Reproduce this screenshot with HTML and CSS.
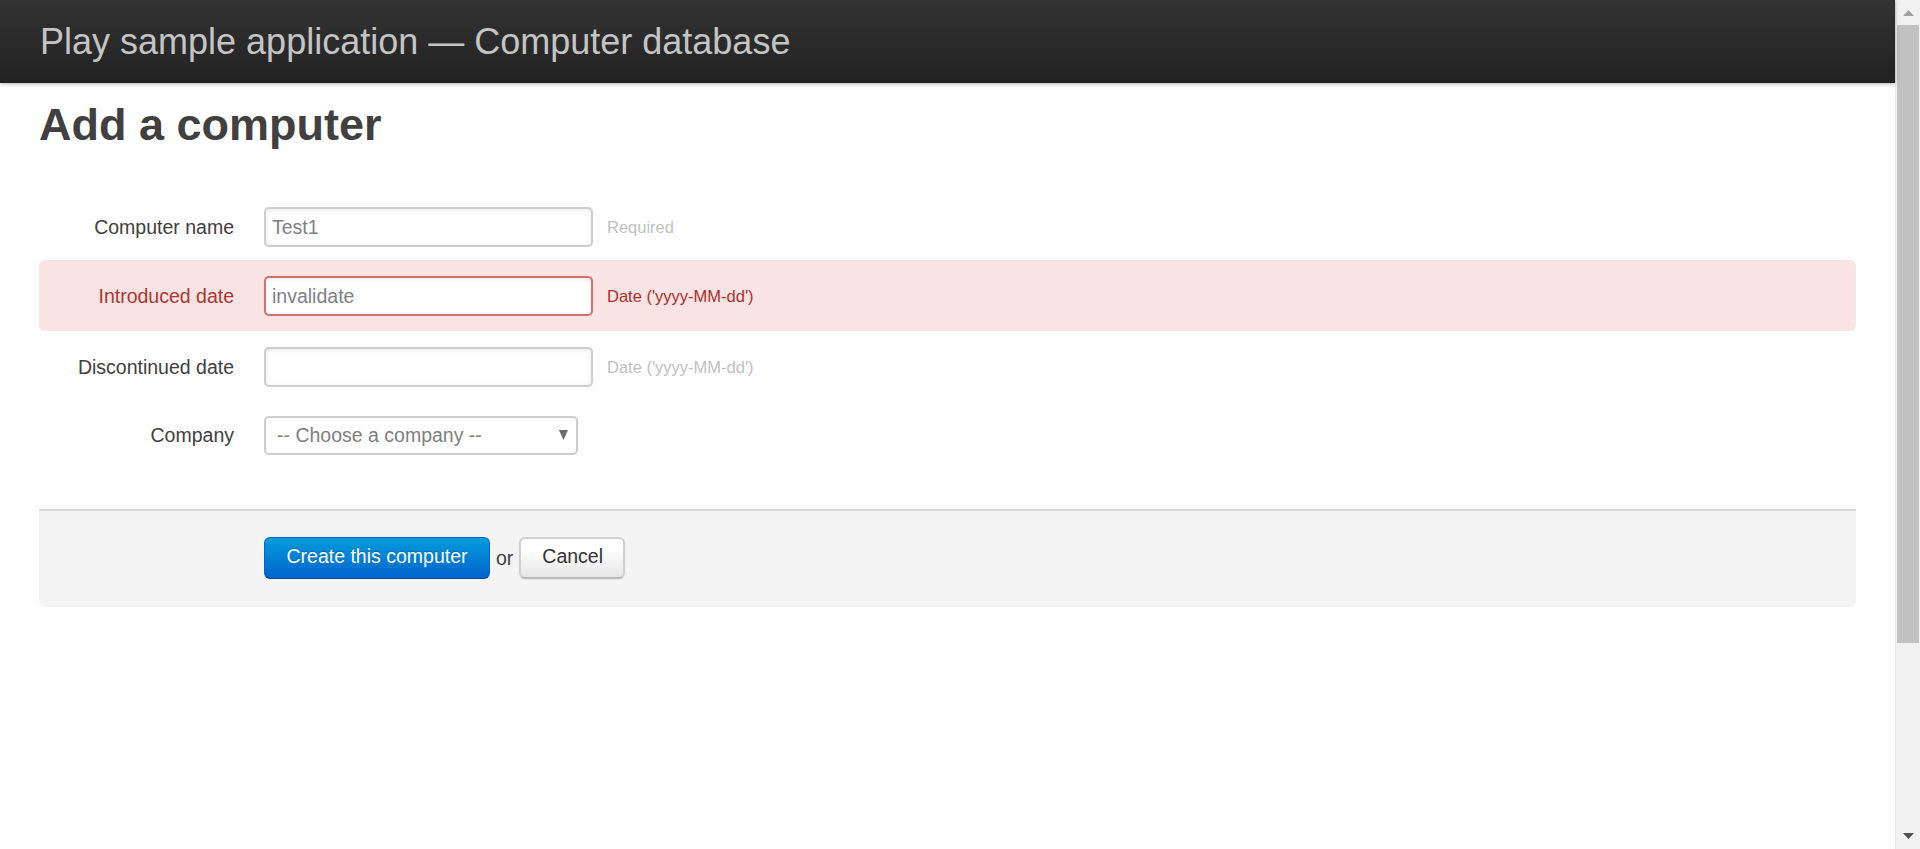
FILE: index.html
```html
<!DOCTYPE html>
<html lang="en">
<head>
<meta charset="utf-8">
<title>Computers database</title>
<link rel="stylesheet" href="styles.css">
</head>
<body>
<div class="page">
  <header class="topbar">
    <h1 class="brand">Play sample application — Computer database</h1>
  </header>
  <section class="main">
    <h1 class="title">Add a computer</h1>
    <form class="form">
      <div class="row">
        <label class="label" for="name">Computer name</label>
        <div class="field">
          <input class="input" id="name" type="text" value="Test1">
          <span class="help">Required</span>
        </div>
      </div>
      <div class="row row-error">
        <label class="label" for="introduced">Introduced date</label>
        <div class="field">
          <input class="input" id="introduced" type="text" value="invalidate">
          <span class="help">Date ('yyyy-MM-dd')</span>
        </div>
      </div>
      <div class="row row-disc">
        <label class="label" for="discontinued">Discontinued date</label>
        <div class="field">
          <input class="input" id="discontinued" type="text" value="">
          <span class="help">Date ('yyyy-MM-dd')</span>
        </div>
      </div>
      <div class="row row-company">
        <label class="label" for="company">Company</label>
        <div class="field">
          <div class="select-wrap">
            <select class="select" id="company">
              <option>-- Choose a company --</option>
            </select>
            <svg class="select-arrow" width="9" height="10" viewBox="0 0 9 10"><path d="M0 0H9L4.5 10Z" fill="#6b6b6b"/></svg>
          </div>
        </div>
      </div>
      <div class="actions">
        <button type="button" class="btn btn-primary">Create this computer</button>
        <span class="or">or</span>
        <button type="button" class="btn btn-default">Cancel</button>
      </div>
    </form>
  </section>
</div>
<div class="scrollbar">
  <div class="sb-btn">
    <svg width="11" height="6" viewBox="0 0 11 6"><path d="M5.5 0L11 6H0Z" fill="#a3a3a3"/></svg>
  </div>
  <div class="sb-track">
    <div class="sb-thumb"></div>
  </div>
  <div class="sb-btn sb-btn-down">
    <svg width="11" height="6" viewBox="0 0 11 6"><path d="M0 0H11L5.5 6Z" fill="#505050"/></svg>
  </div>
</div>
</body>
</html>
```

FILE: styles.css
```css
html, body {
  margin: 0;
  padding: 0;
  height: 100%;
}

body {
  display: flex;
  height: 100vh;
  overflow: hidden;
  background: #fff;
  font-family: "Liberation Sans", Arial, Helvetica, sans-serif;
  font-size: 19.5px;
  color: #404040;
}

.page {
  flex: 1;
  min-width: 0;
  display: flex;
  flex-direction: column;
}

.topbar {
  height: 83px;
  flex: none;
  background: linear-gradient(to bottom, #333333, #222222);
  box-shadow: 0 1px 4px rgba(0, 0, 0, 0.3);
  display: flex;
  align-items: center;
  padding-left: 40px;
  position: relative;
  z-index: 1;
}

.brand {
  margin: 0;
  font-size: 36px;
  font-weight: normal;
  line-height: 42px;
  color: #c4c4c4;
}

.main {
  padding: 0 39px;
}

.title {
  margin: 15px 0 0;
  font-size: 45px;
  line-height: 54px;
  font-weight: bold;
  color: #404040;
}

.form {
  margin: 55px 0 0;
}

.row {
  display: flex;
  align-items: center;
  margin-bottom: 13px;
}

.label {
  width: 195px;
  flex: none;
  text-align: right;
  line-height: 27px;
  color: #404040;
  margin-right: 30px;
}

.field {
  display: flex;
  align-items: center;
}

.input {
  box-sizing: border-box;
  width: 329px;
  height: 40px;
  padding: 0 6px;
  margin: 0;
  border: 2px solid #cdcdcd;
  border-radius: 5px;
  box-shadow: inset 0 1px 4px rgba(0, 0, 0, 0.1);
  font-family: inherit;
  font-size: 19.5px;
  color: #7d8088;
  background: #fff;
  outline: none;
}

.help {
  margin-left: 14px;
  font-size: 16.5px;
  color: #bfbfbf;
}

.row-error {
  background: #f9e4e3;
  border-radius: 6px;
  padding: 16px 0 15px;
  margin-bottom: 16px;
}

.row-error .label {
  color: #aa3832;
}

.row-error .input {
  border-color: #cd7472;
}

.row-error .help {
  color: #aa3029;
}

.row-disc {
  margin-bottom: 29px;
}

.row-company {
  margin-bottom: 54px;
}

.select-wrap {
  position: relative;
}

.select {
  box-sizing: border-box;
  width: 314px;
  height: 39px;
  margin: 0;
  padding: 0 30px 2px 11px;
  border: 2px solid #cdcdcd;
  border-radius: 5px;
  background: #fff;
  font-family: inherit;
  font-size: 19.5px;
  color: #808080;
  appearance: none;
  -webkit-appearance: none;
  outline: none;
}

.select-arrow {
  position: absolute;
  right: 10px;
  top: 14px;
  pointer-events: none;
}

.actions {
  display: flex;
  align-items: center;
  background: #f4f4f4;
  border-top: 2px solid #dadada;
  border-radius: 0 0 6px 6px;
  padding: 26px 0 28px 225px;
}

.btn {
  box-sizing: border-box;
  height: 42px;
  padding: 0 21px 3px;
  margin: 0;
  font-family: inherit;
  font-size: 19.5px;
  border-radius: 6px;
  cursor: pointer;
}

.btn-primary {
  width: 226px;
  color: #fff;
  background: linear-gradient(to bottom, #049cdb, #0064cd);
  border: 1px solid #0064cd;
  border-bottom-color: #004a99;
  text-shadow: 0 -1px 0 rgba(0, 0, 0, 0.25);
}

.btn-default {
  width: 106px;
  color: #333;
  background: linear-gradient(to bottom, #ffffff, #ffffff 25%, #e6e6e6);
  border: 2px solid #cfcfcf;
  border-bottom-color: #bbbbbb;
  box-shadow: 0 1px 2px rgba(0, 0, 0, 0.05);
}

.or {
  margin: 0 6px;
  color: #404040;
}

.scrollbar {
  width: 25px;
  flex: none;
  background: #f1f1f1;
  border-left: 1px solid #e8e8e8;
  box-sizing: border-box;
  display: flex;
  flex-direction: column;
}

.sb-btn {
  height: 25px;
  display: flex;
  align-items: center;
  justify-content: center;
  flex: none;
}

.sb-btn-down {
  height: 24px;
  align-items: flex-start;
  padding-top: 8px;
  box-sizing: border-box;
}

.sb-track {
  flex: 1;
  padding: 0 1px 0 1px;
}

.sb-thumb {
  height: 618px;
  background: #c1c1c1;
}
```
